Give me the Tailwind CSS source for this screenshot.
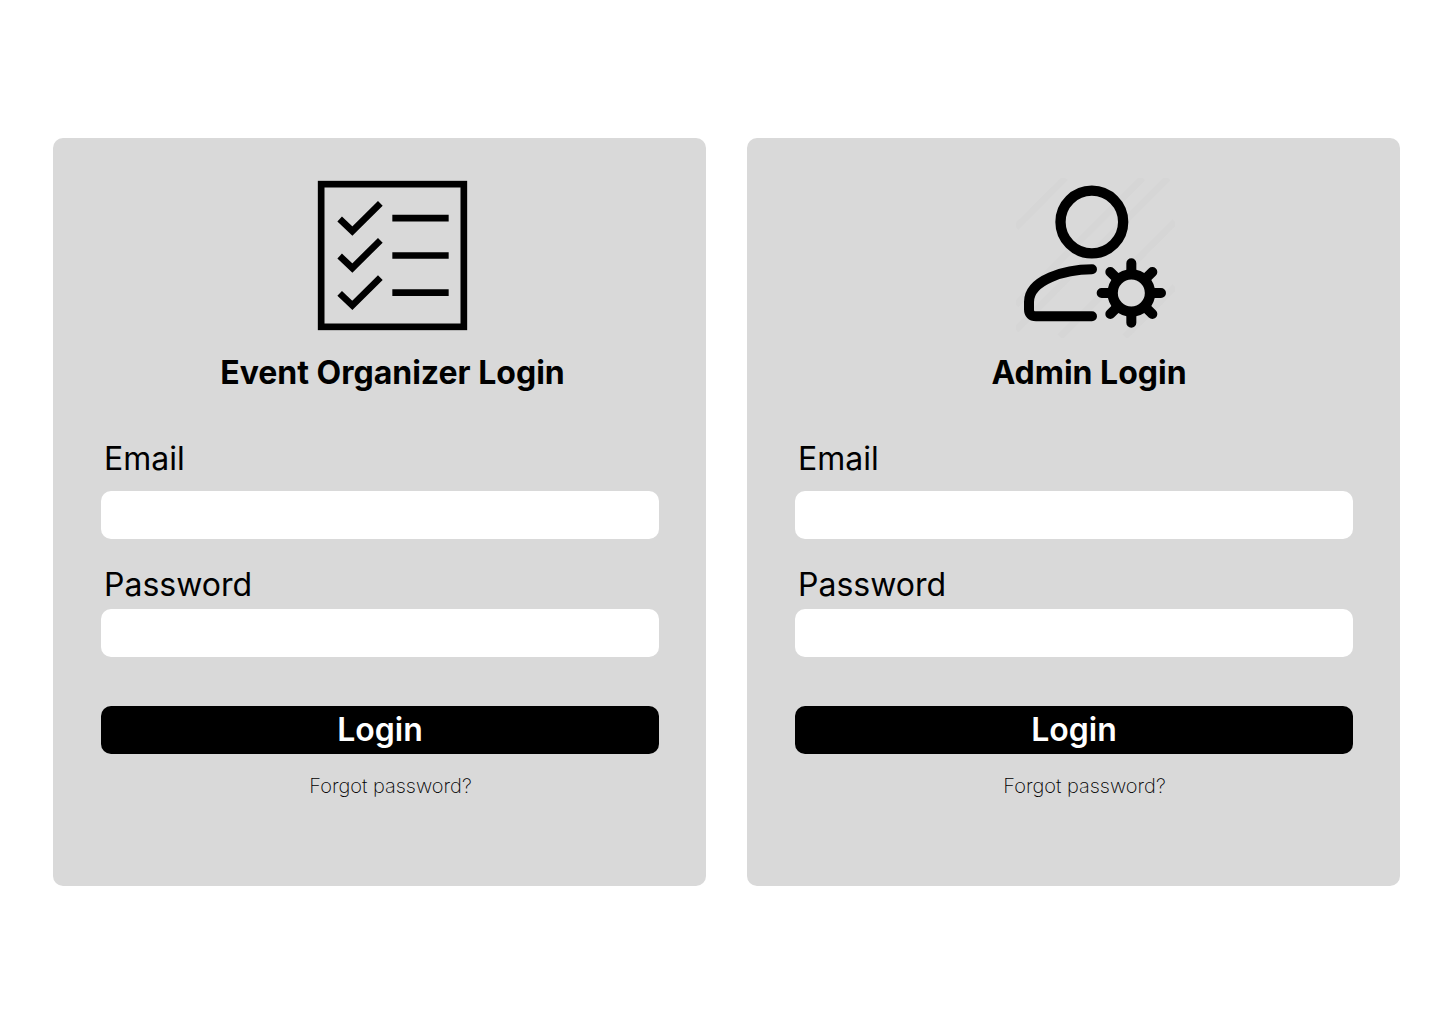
<!DOCTYPE html>
<html lang="en">
<head>
<meta charset="utf-8">
<meta name="viewport" content="width=device-width, initial-scale=1">
<title>Login</title>
<script src="https://cdn.jsdelivr.net/npm/@tailwindcss/browser@4"></script>
</head>
<body class="bg-white font-['Inter',sans-serif] text-black antialiased">
<main class="grid min-h-screen grid-cols-2 content-center gap-[41px] pr-10 pl-[53px]">
  <section class="rounded-[10px] bg-[#d9d9d9] pt-10 pb-[88px]">
    <div class="flex justify-center pl-[26px]">
      <svg class="h-40 w-[159px]" viewBox="24 24 477 480" fill="none" stroke="#000" stroke-width="20" aria-hidden="true">
        <rect x="48.500" y="42.500" width="428" height="428"/>
        <path d="M104 147l38 36 84-83M104 258l38 36 84-83M104 370l38 36 84-83M262 144.500h169M262 256.500h169M262 368h169"/>
      </svg>
    </div>
    <h1 class="mt-[15px] pl-[26px] text-center text-[32px] leading-10 font-bold">Event Organizer Login</h1>
    <form class="mt-[46px] flex flex-col pr-[47px] pl-12">
      <label for="organizer-email" class="pl-[3px] text-[32px] leading-10">Email</label>
      <input id="organizer-email" type="email" class="mt-3 h-12 rounded-[10px] bg-white px-4 text-xl">
      <label for="organizer-password" class="mt-[26px] pl-[3px] text-[32px] leading-10">Password</label>
      <input id="organizer-password" type="password" class="mt-1 h-12 rounded-[10px] bg-white px-4 text-xl">
      <button type="submit" class="mt-[49px] h-12 rounded-[10px] bg-black text-[32px] leading-10 font-semibold text-white">Login</button>
      <div class="mt-5 pl-[21px] text-center text-xl leading-6 font-extralight"><a href="#">Forgot password?</a></div>
    </form>
  </section>
  <section class="rounded-[10px] bg-[#d9d9d9] pt-10 pb-[88px]">
    <div class="flex justify-center pl-11">
      <svg class="h-40 w-[159px]" viewBox="33 24 477 480" fill="none" stroke="#000" stroke-linecap="round" stroke-linejoin="round" aria-hidden="true">
        <path d="M33 172L181 24M33 404L413 24M33 480L489 24M165 500L510 155M360 500L510 350" stroke="#d6d6d6" stroke-width="20" stroke-linecap="butt"/>
        <circle cx="260.500" cy="156" r="94" stroke-width="31"/>
        <path d="M261 298C180 298 72 330 72 396V418Q72 439 93 439H261" stroke-width="30"/>
        <circle cx="379" cy="369" r="56" stroke-width="31"/>
        <path d="M379 307V280M379 431V458M317 369H290M441 369H468M335 325L316 306M423 325L442 306M335 413L316 432M423 413L442 432" stroke-width="30"/>
      </svg>
    </div>
    <h1 class="mt-[15px] pl-[31px] text-center text-[32px] leading-10 font-bold">Admin Login</h1>
    <form class="mt-[46px] flex flex-col pr-[47px] pl-12">
      <label for="admin-email" class="pl-[3px] text-[32px] leading-10">Email</label>
      <input id="admin-email" type="email" class="mt-3 h-12 rounded-[10px] bg-white px-4 text-xl">
      <label for="admin-password" class="mt-[26px] pl-[3px] text-[32px] leading-10">Password</label>
      <input id="admin-password" type="password" class="mt-1 h-12 rounded-[10px] bg-white px-4 text-xl">
      <button type="submit" class="mt-[49px] h-12 rounded-[10px] bg-black text-[32px] leading-10 font-semibold text-white">Login</button>
      <div class="mt-5 pl-[21px] text-center text-xl leading-6 font-extralight"><a href="#">Forgot password?</a></div>
    </form>
  </section>
</main>
</body>
</html>
